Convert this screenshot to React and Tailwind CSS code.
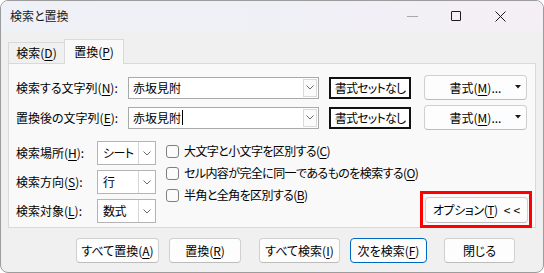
import React from "react";

const U = ({ c }) => <span className="underline underline-offset-[2px]">{c}</span>;

const Chevron = () => (
  <svg width="8" height="5" viewBox="0 0 8 5">
    <path d="M0.5 0.5 L4 4 L7.5 0.5" stroke="#6b6b6b" strokeWidth="1" fill="none" />
  </svg>
);

function Combo({ text, cursor }) {
  return (
    <div className="flex h-[22px] w-[191px] shrink-0 items-stretch border border-[#a9a9a9] bg-white">
      <div className="flex flex-1 items-center whitespace-nowrap pl-[4px] text-[12px] leading-[14px] text-black">
        {text}
        {cursor && <span className="ml-[1px] inline-block h-[15px] w-px bg-black" />}
      </div>
      <div className="my-[1px] mr-[1px] flex w-[14px] items-center justify-center border border-[#dadada] bg-[#fbfbfb]">
        <Chevron />
      </div>
    </div>
  );
}

function Select({ text }) {
  return (
    <div className="flex h-[24px] w-[59px] shrink-0 items-stretch border border-[#b4b4b4] bg-white">
      <div className="flex flex-1 items-center whitespace-nowrap pl-[5px] text-[12px] leading-[14px] tracking-[-0.6px] text-black">{text}</div>
      <div className="flex w-[17px] items-center justify-center border-l border-[#d6d6d6] bg-white">
        <Chevron />
      </div>
    </div>
  );
}

function Btn({ children, w, primary, extra = "" }) {
  return (
    <div
      className={`flex h-[25px] shrink-0 items-center justify-center whitespace-nowrap rounded-[4px] border bg-[#fdfdfd] text-[12px] leading-[14px] text-black ${
        primary ? "border-[#0067c0]" : "border-[#d0d0d0] border-b-[#bcbcbc]"
      } ${w} ${extra}`}
    >
      {children}
    </div>
  );
}

function Check({ children }) {
  return (
    <div className="flex h-[22px] items-center">
      <div className="h-[13px] w-[13px] shrink-0 rounded-[3px] border border-[#7f7f7f] bg-[#fbfbfb]" />
      <span className="ml-[5px] whitespace-nowrap text-[12px] leading-[14px] tracking-[-0.6px] text-black">{children}</span>
    </div>
  );
}

export default function App() {
  return (
    <div className="h-[273px] w-[544px] bg-white font-['Noto_Sans_CJK_JP','Noto_Sans',sans-serif] [font-feature-settings:'palt']">
      <div className="flex h-[273px] w-[544px] flex-col overflow-hidden rounded-[8px] border border-[#9c9c9c] bg-[#f0f0f0]">
        {/* title bar */}
        <div className="flex h-[30px] shrink-0 items-center bg-gradient-to-r from-[#eef1f7] via-[#eff0f6] to-[#f5eff4]">
          <span className="ml-[9px] whitespace-nowrap text-[12px] leading-[14px] text-[#1a1a1a]">検索と置換</span>
          <div className="ml-auto mr-[21px] flex items-center">
            <div className="flex h-[30px] w-[44px] items-center justify-center">
              <div className="h-px w-[11px] bg-[#a8a8a8]" />
            </div>
            <div className="flex h-[30px] w-[44px] items-center justify-center">
              <div className="h-[10px] w-[10px] rounded-[1px] border border-[#1a1a1a]" />
            </div>
            <div className="flex h-[30px] w-[44px] items-center justify-center">
              <svg width="11" height="11" viewBox="0 0 11 11">
                <path d="M0.5 0.5 L10.5 10.5 M10.5 0.5 L0.5 10.5" stroke="#1a1a1a" strokeWidth="1" />
              </svg>
            </div>
          </div>
        </div>

        {/* body */}
        <div className="flex flex-1 flex-col pl-[7px] pr-[7px]">
          {/* tabs */}
          <div className="mt-[8px] flex items-end">
            <div className="flex h-[21px] w-[56px] items-center justify-center whitespace-nowrap border-l border-t border-[#d9d9d9] bg-[#f0f0f0] text-[12px] leading-[14px] text-black">
              検索(<U c="D" />)
            </div>
            <div className="relative z-10 -mb-px flex h-[25px] w-[60px] items-center justify-center whitespace-nowrap border-l border-r border-t border-[#d9d9d9] bg-[#f9f9f9] pb-[1px] text-[12px] leading-[14px] text-black">
              置換(<U c="P" />)
            </div>
          </div>

          {/* panel */}
          <div className="flex h-[165px] flex-col border border-[#d9d9d9] bg-[#f9f9f9] pl-[7px] pt-[11px]">
            <div className="flex items-center">
              <span className="w-[112px] shrink-0 whitespace-nowrap text-[12px] leading-[14px] text-black">
                検索する文字列(<U c="N" />):
              </span>
              <Combo text="赤坂見附" />
              <div className="ml-[10px] flex h-[22px] w-[82px] shrink-0 items-center justify-center whitespace-nowrap border-2 border-[#111] bg-white text-[12px] leading-[14px] tracking-[-0.8px] text-black">
                書式セットなし
              </div>
              <Btn w="w-[103px]" extra="ml-[13px] relative h-[22px]">
                書式(<U c="M" />)...
                <svg className="absolute right-[5px] top-[9px]" width="6" height="4" viewBox="0 0 6 4">
                  <path d="M0 0 L6 0 L3 3.5 Z" fill="#1a1a1a" />
                </svg>
              </Btn>
            </div>
            <div className="mt-[5px] flex items-center">
              <span className="w-[112px] shrink-0 whitespace-nowrap text-[12px] leading-[14px] text-black">
                置換後の文字列(<U c="E" />):
              </span>
              <Combo text="赤坂見附" cursor />
              <div className="ml-[10px] flex h-[22px] w-[82px] shrink-0 items-center justify-center whitespace-nowrap border-2 border-[#111] bg-white text-[12px] leading-[14px] tracking-[-0.8px] text-black">
                書式セットなし
              </div>
              <Btn w="w-[103px]" extra="ml-[13px] relative h-[22px]">
                書式(<U c="M" />)...
                <svg className="absolute right-[5px] top-[9px]" width="6" height="4" viewBox="0 0 6 4">
                  <path d="M0 0 L6 0 L3 3.5 Z" fill="#1a1a1a" />
                </svg>
              </Btn>
            </div>

            {/* options */}
            <div className="mt-[11px] flex">
              <div className="flex shrink-0 flex-col gap-[5px]">
                <div className="flex items-center">
                  <span className="w-[81px] shrink-0 whitespace-nowrap text-[12px] leading-[14px] text-black">
                    検索場所(<U c="H" />):
                  </span>
                  <Select text="シート" />
                </div>
                <div className="flex items-center">
                  <span className="w-[81px] shrink-0 whitespace-nowrap text-[12px] leading-[14px] text-black">
                    検索方向(<U c="S" />):
                  </span>
                  <Select text="行" />
                </div>
                <div className="flex items-center">
                  <span className="w-[81px] shrink-0 whitespace-nowrap text-[12px] leading-[14px] text-black">
                    検索対象(<U c="L" />):
                  </span>
                  <Select text="数式" />
                </div>
              </div>
              <div className="-mt-px ml-[10px] flex w-[250px] shrink-0 flex-col self-start">
                <Check>
                  大文字と小文字を区別する(<U c="C" />)
                </Check>
                <Check>
                  セル内容が完全に同一であるものを検索する(<U c="O" />)
                </Check>
                <Check>
                  半角と全角を区別する(<U c="B" />)
                </Check>
              </div>
              <div className="mb-[-5px] ml-auto mr-[3px] shrink-0 self-end border-[3px] border-[#f00] pb-[2px] pl-[2px] pr-[1px] pt-[3px]">
                <Btn w="w-[103px]" extra="h-[26px]">
                  <span className="tracking-[-0.4px]">
                    オプション(<U c="T" />)
                  </span>
                  <span className="ml-[6px]">&lt;</span>
                  <span className="ml-[3px]">&lt;</span>
                </Btn>
              </div>
            </div>
          </div>

          {/* bottom buttons */}
          <div className="mt-[10px] flex">
            <Btn w="w-[83px]" extra="ml-[68px]">
              すべて置換(<U c="A" />)
            </Btn>
            <Btn w="w-[72px]" extra="ml-[10px]">
              置換(<U c="R" />)
            </Btn>
            <Btn w="w-[81px]" extra="ml-[18px]">
              すべて検索(<U c="I" />)
            </Btn>
            <Btn w="w-[77px]" extra="ml-[10px]" primary>
              次を検索(<U c="F" />)
            </Btn>
            <Btn w="w-[71px]" extra="ml-[17px]">
              閉じる
            </Btn>
          </div>
        </div>
      </div>
    </div>
  );
}
